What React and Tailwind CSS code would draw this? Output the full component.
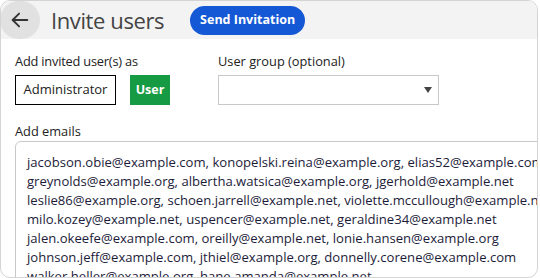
const emails = [
  "jacobson.obie@example.com, konopelski.reina@example.org, elias52@example.com",
  "greynolds@example.org, albertha.watsica@example.org, jgerhold@example.net",
  "leslie86@example.org, schoen.jarrell@example.net, violette.mccullough@example.net",
  "milo.kozey@example.net, uspencer@example.net, geraldine34@example.net",
  "jalen.okeefe@example.com, oreilly@example.net, lonie.hansen@example.org",
  "johnson.jeff@example.com, jthiel@example.org, donnelly.corene@example.com",
  "walker.heller@example.org, hane.amanda@example.net",
];

export default function App() {
  return (
    <div className="w-[540px] h-[278px] bg-white font-['Open_Sans',sans-serif]">
      <div className="w-[538px] h-[278px] border border-[#d4d4d4] rounded-[10px] overflow-hidden flex flex-col">
        <header className="h-[38px] shrink-0 bg-[#f3f3f3] flex items-center">
          <button className="w-[40px] h-[38px] rounded-full bg-[#e1e1e1] flex items-center justify-center -ml-px">
            <svg width="22" height="22" viewBox="0 0 24 24" fill="none" stroke="#333" strokeWidth="2" strokeLinecap="round" strokeLinejoin="round">
              <path d="M20 12H4" />
              <path d="M11 5l-7 7 7 7" />
            </svg>
          </button>
          <h1 className="ml-[11px] text-[22px] leading-none text-[#444] tracking-[-0.4px]">Invite users</h1>
          <button className="ml-[26px] h-[29px] px-[10px] rounded-full bg-[#1558d6] text-white text-[12.5px] font-bold">
            Send Invitation
          </button>
        </header>
        <div className="flex-1 min-h-0 px-[14px] pt-[12px] text-[#222]">
          <div className="flex">
            <div className="w-[203px] shrink-0">
              <div className="text-[12.8px] leading-[20px] tracking-[-0.2px]">Add invited user(s) as</div>
              <div className="mt-[4px] flex gap-[14px]">
                <div className="w-[101px] h-[30px] border border-black flex items-center justify-center text-[13px]">Administrator</div>
                <div className="w-[40px] h-[30px] bg-[#169a43] text-white font-bold flex items-center justify-center text-[12.5px]">User</div>
              </div>
            </div>
            <div>
              <div className="text-[12.8px] leading-[20px]">User group (optional)</div>
              <div className="mt-[4px] w-[221px] h-[30px] border border-[#c8c8c8] flex items-center justify-end pr-[6px]">
                <svg width="8" height="6" viewBox="0 0 8 6"><path d="M0 0h8L4 6z" fill="#444" /></svg>
              </div>
            </div>
          </div>
          <div className="mt-[16px] text-[12.8px] leading-[20px]">Add emails</div>
          <div className="w-[560px] h-[200px] border border-[#c8c8c8] rounded-[6px] px-[11px] pt-[11px] text-[13.1px] leading-[19px] text-[#1c1c3a] whitespace-nowrap">
            {emails.map((e) => (
              <div key={e}>{e}</div>
            ))}
          </div>
        </div>
      </div>
    </div>
  );
}
